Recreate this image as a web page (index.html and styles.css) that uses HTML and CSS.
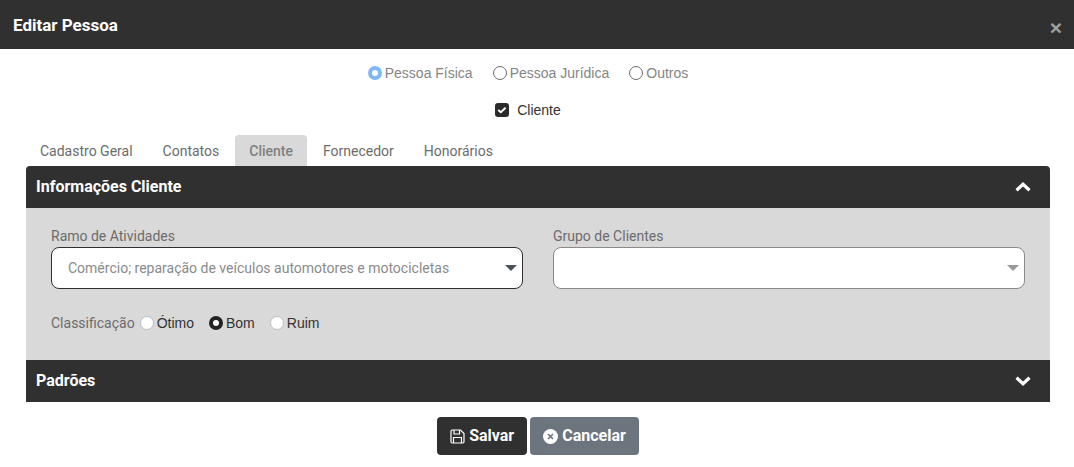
FILE: index.html
```html
<!DOCTYPE html>
<html lang="pt-BR">
<head>
  <meta charset="UTF-8" />
  <title>Editar Pessoa</title>
  <link rel="stylesheet" href="styles.css">
</head>
<body>
  <header class="modal-header">
    <h1>Editar Pessoa</h1>
    <button class="close">×</button>
  </header>

  <div class="person-type">
    <label class="radio-item"><span class="radio radio-blue"></span>Pessoa Física</label>
    <label class="radio-item"><span class="radio"></span>Pessoa Jurídica</label>
    <label class="radio-item"><span class="radio"></span>Outros</label>
  </div>

  <div class="client-check">
    <span class="checkbox">
      <svg width="10" height="8" viewBox="0 0 10 8"><path d="M1.2 4 3.8 6.2 8.6 1.8" fill="none" stroke="#fff" stroke-width="2"/></svg>
    </span>
    <span>Cliente</span>
  </div>

  <nav class="tabs">
    <a class="tab">Cadastro Geral</a>
    <a class="tab">Contatos</a>
    <a class="tab active">Cliente</a>
    <a class="tab">Fornecedor</a>
    <a class="tab">Honorários</a>
  </nav>

  <section class="accordion">
    <div class="acc-head acc-first">
      <span>Informações Cliente</span>
      <svg width="16" height="10" viewBox="0 0 16 10"><path d="M1.5 8.2 8 2.2 14.5 8.2" fill="none" stroke="#fff" stroke-width="3.2"/></svg>
    </div>
    <div class="acc-body">
      <div class="fields">
        <div class="field">
          <label>Ramo de Atividades</label>
          <div class="select select-dark">
            <span>Comércio; reparação de veículos automotores e motocicletas</span>
            <i class="caret caret-dark"></i>
          </div>
        </div>
        <div class="field">
          <label>Grupo de Clientes</label>
          <div class="select">
            <span></span>
            <i class="caret"></i>
          </div>
        </div>
      </div>
      <div class="rating">
        <span class="rating-label">Classificação</span>
        <label class="radio-item"><span class="radio radio-white"></span>Ótimo</label>
        <label class="radio-item"><span class="radio radio-black"></span>Bom</label>
        <label class="radio-item"><span class="radio radio-white"></span>Ruim</label>
      </div>
    </div>
    <div class="acc-head">
      <span>Padrões</span>
      <svg width="16" height="10" viewBox="0 0 16 10"><path d="M1.5 1.8 8 7.8 14.5 1.8" fill="none" stroke="#fff" stroke-width="3.2"/></svg>
    </div>
  </section>

  <footer class="actions">
    <button class="btn btn-dark">
      <svg width="15" height="15" viewBox="0 0 15 15" fill="none" stroke="#fff" stroke-width="1.2"><path d="M1 2.2C1 1.5 1.5 1 2.2 1H10.5L14 4.5V12.8C14 13.5 13.5 14 12.8 14H2.2C1.5 14 1 13.5 1 12.8Z"/><path d="M4 1V5H9.5V1"/><path d="M3.5 14V8.5H11.5V14"/></svg>
      <span>Salvar</span>
    </button>
    <button class="btn btn-gray">
      <svg width="15" height="15" viewBox="0 0 15 15"><circle cx="7.5" cy="7.5" r="7.5" fill="#fff"/><path d="M5 5 10 10M10 5 5 10" stroke="#6c757d" stroke-width="1.6"/></svg>
      <span>Cancelar</span>
    </button>
  </footer>
</body>
</html>
```

FILE: styles.css
```css
* {
  box-sizing: border-box;
}

body {
  margin: 0;
  height: 467px;
  overflow: hidden;
  background: #fff;
  font-family: Roboto, sans-serif;
  font-size: 14px;
  color: #212529;
}

.modal-header {
  height: 49px;
  background: #303030;
  color: #fff;
  display: flex;
  justify-content: space-between;
  align-items: center;
  padding: 0 12px 0 13px;
}

.modal-header h1 {
  margin: 0;
  font-size: 17px;
  font-weight: 700;
}

.close {
  background: none;
  border: none;
  padding: 0;
  margin-top: 5px;
  color: #a0a0a0;
  font-family: "Liberation Sans", sans-serif;
  font-size: 21px;
  font-weight: 700;
  line-height: 1;
}

.person-type {
  height: 47px;
  display: flex;
  justify-content: center;
  align-items: center;
  gap: 20px;
  padding-right: 18px;
  color: #858585;
  font-family: "Liberation Sans", sans-serif;
}

.radio-item {
  display: flex;
  align-items: center;
  gap: 3px;
}

.radio {
  width: 14px;
  height: 14px;
  border-radius: 50%;
  border: 1px solid #6c6c6c;
  background: #fff;
}

.radio-blue {
  border: 4px solid #7db8fb;
}

.radio-black {
  border: 4px solid #222;
}

.radio-white {
  border-color: #b8c0c8;
}

.client-check {
  height: 27px;
  display: flex;
  justify-content: center;
  align-items: center;
  gap: 8px;
  padding-right: 18px;
  font-family: "Liberation Sans", sans-serif;
  color: #333;
}

.checkbox {
  width: 14px;
  height: 14px;
  border-radius: 3px;
  background: #2b2b2b;
  display: flex;
  align-items: center;
  justify-content: center;
}

.tabs {
  display: flex;
  margin: 12px 0 0 26px;
  height: 31px;
}

.tab {
  padding: 0 14px;
  margin-right: 2px;
  line-height: 32px;
  color: #6c6c6c;
  border-radius: 4px 4px 0 0;
}

.tab.active {
  background: #d9d9d9;
  color: #808080;
  font-weight: 500;
}

.accordion {
  margin: 0 24px 0 26px;
}

.acc-head {
  height: 42px;
  background: #303030;
  color: #fff;
  font-size: 16px;
  font-weight: 700;
  display: flex;
  justify-content: space-between;
  align-items: center;
  padding: 0 19px 0 10px;
}

.acc-head span {
  margin-top: -2px;
}

.acc-first {
  border-radius: 4px 4px 0 0;
}

.acc-body {
  height: 152px;
  background: #d9d9d9;
  padding: 20px 25px 0;
}

.fields {
  display: grid;
  grid-template-columns: 472px 472px;
  gap: 30px;
}

.field label {
  display: block;
  height: 19px;
  color: #6c6c6c;
}

.select {
  height: 42px;
  background: #fff;
  border: 1px solid #8a8a8a;
  border-radius: 8px;
  display: flex;
  justify-content: space-between;
  align-items: center;
  padding: 0 5px 0 16px;
  color: #8a8a8a;
}

.select-dark {
  border-color: #303030;
}

.caret {
  width: 0;
  height: 0;
  border-left: 6px solid transparent;
  border-right: 6px solid transparent;
  border-top: 6px solid #999;
}

.caret-dark {
  border-top-color: #495057;
}

.rating {
  display: flex;
  align-items: center;
  margin-top: 24px;
  height: 20px;
  color: #333;
}

.rating-label {
  color: #6c6c6c;
  margin-right: 5px;
}

.rating .radio-item {
  margin-right: 15px;
  font-family: "Liberation Sans", sans-serif;
}

.actions {
  display: flex;
  justify-content: center;
  gap: 3px;
  margin-top: 15px;
  padding-left: 2px;
}

.btn {
  height: 38px;
  border: none;
  border-radius: 4px;
  color: #fff;
  font-family: Roboto, sans-serif;
  font-size: 16px;
  font-weight: 700;
  display: flex;
  align-items: center;
  gap: 4px;
  padding: 0 13px;
}

.btn span {
  margin-top: -2px;
}

.btn-dark {
  background: #303030;
}

.btn-gray {
  background: #6c757d;
}
```
